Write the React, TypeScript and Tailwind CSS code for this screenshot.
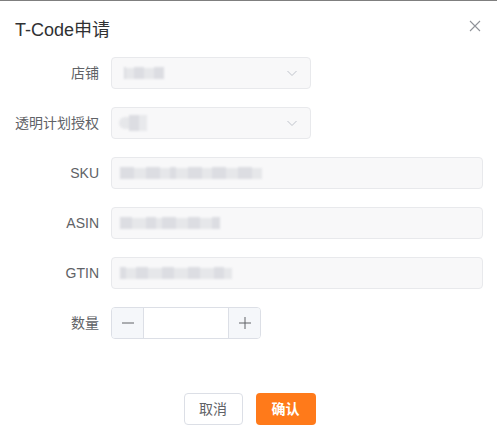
import React from "react";

const font = { fontFamily: '"Liberation Sans", "Noto Sans CJK SC", sans-serif' };

function Blur({ widths }: { widths: number[] }) {
    return (
        <div className="flex items-center blur-[1px]">
            {widths.map((w, i) => (
                <span
                    key={i}
                    className={i % 2 ? "h-[11px] bg-[#e6e7ea]" : "h-[12px] bg-[#dcdde2]"}
                    style={{ width: w }}
                />
            ))}
        </div>
    );
}

function Chevron() {
    return (
        <svg width="12" height="12" viewBox="0 0 12 12" className="text-[#c0c4cc]">
            <path d="M1.5 4l4.5 4.5L10.5 4" fill="none" stroke="currentColor" strokeWidth="1" />
        </svg>
    );
}

function Row({ label, children }: { label: string; children: React.ReactNode }) {
    return (
        <div className="flex items-center h-8 mb-[18px]">
            <label className="w-[96px] pr-3 text-right text-sm text-[#606266]">{label}</label>
            {children}
        </div>
    );
}

function Select({ blur }: { blur: number[] }) {
    return (
        <div className="w-[200px] h-8 flex items-center justify-between pl-3 pr-3 rounded bg-[#f8f8f9] border border-[#e8e9ec]">
            <Blur widths={blur} />
            <Chevron />
        </div>
    );
}

function Input({ blur }: { blur: number[] }) {
    return (
        <div className="w-[372px] h-8 flex items-center px-2 rounded bg-[#f8f8f9] border border-[#e8e9ec]">
            <Blur widths={blur} />
        </div>
    );
}

export default function App() {
    return (
        <div className="w-[497px] h-[440px] bg-white border-t border-[#7f7f7f] relative" style={font}>
            <div className="flex items-center justify-between pl-[15px] pr-4 pt-[17px] pb-[15px]">
                <h2 className="text-[18px] leading-6 text-[#303133]">T-Code申请</h2>
                <svg width="12" height="12" viewBox="0 0 12 12" className="text-[#909399] -mt-2">
                    <path d="M1 1l10 10M11 1L1 11" stroke="currentColor" strokeWidth="1.1" />
                </svg>
            </div>
            <div className="pl-[15px]">
                <Row label="店铺">
                    <Select blur={[2, 8, 10, 10, 10]} />
                </Row>
                <Row label="透明计划授权">
                    <div className="w-[200px] h-8 flex items-center justify-between pl-[7px] pr-3 rounded bg-[#f8f8f9] border border-[#e8e9ec]">
                        <div className="flex items-center blur-[1px]">
                            <span className="w-[10px] h-[12px] bg-[#e6e7ea] rounded-l-full" />
                            <span className="w-[10px] h-[16px] bg-[#dcdde2]" />
                            <span className="w-[8px] h-[16px] bg-[#e8e9ec]" />
                        </div>
                        <Chevron />
                    </div>
                </Row>
                <Row label="SKU">
                    <Input blur={[14, 12, 14, 10, 6, 12, 14, 10, 14, 12, 14, 10]} />
                </Row>
                <Row label="ASIN">
                    <Input blur={[12, 14, 10, 6, 14, 12, 12, 12, 8]} />
                </Row>
                <Row label="GTIN">
                    <Input blur={[6, 10, 12, 14, 12, 14, 12, 14, 10, 8]} />
                </Row>
                <Row label="数量">
                    <div className="w-[150px] h-8 flex rounded border border-[#dcdfe6] overflow-hidden">
                        <div className="w-8 flex items-center justify-center bg-[#f5f7fa] border-r border-[#dcdfe6] text-[#606266]">
                            <svg width="12" height="12" viewBox="0 0 12 12">
                                <path d="M0 6h12" stroke="currentColor" strokeWidth="1" />
                            </svg>
                        </div>
                        <div className="flex-1 bg-white" />
                        <div className="w-8 flex items-center justify-center bg-[#f5f7fa] border-l border-[#dcdfe6] text-[#606266]">
                            <svg width="12" height="12" viewBox="0 0 12 12">
                                <path d="M0 6h12M6 0v12" stroke="currentColor" strokeWidth="1" />
                            </svg>
                        </div>
                    </div>
                </Row>
            </div>
            <div className="flex justify-center gap-[13px] mt-[54px] pl-[2px]">
                <button className="w-[59px] h-8 rounded border border-[#dcdfe6] bg-white text-sm text-[#606266]">
                    取消
                </button>
                <button className="w-[60px] h-8 rounded bg-[#ff7a1a] text-sm text-white font-bold">
                    确认
                </button>
            </div>
        </div>
    );
}
